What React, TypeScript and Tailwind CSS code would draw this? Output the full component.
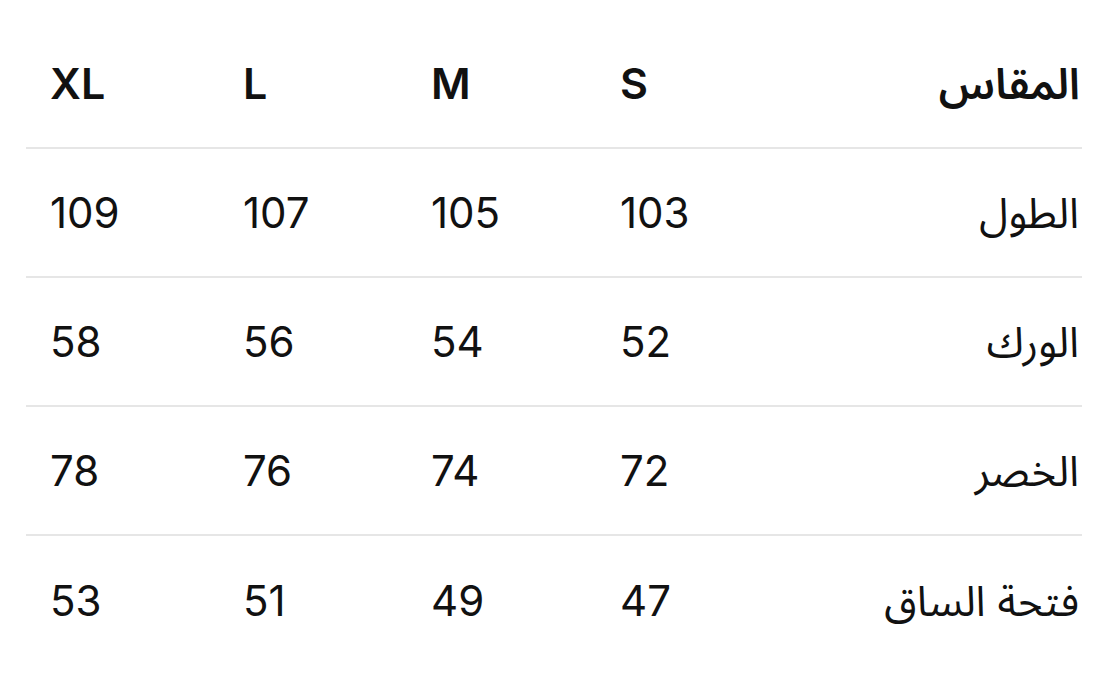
import React from "react";

const headers = ["المقاس", "S", "M", "L", "XL"];
const rows: string[][] = [
  ["الطول", "103", "105", "107", "109"],
  ["الورك", "52", "54", "56", "58"],
  ["الخصر", "72", "74", "76", "78"],
  ["فتحة الساق", "47", "49", "51", "53"],
];

const font = { fontFamily: 'Inter, "Noto Sans Arabic", "DejaVu Sans", sans-serif' };

export default function App() {
  return (
    <div className="w-[1114px] h-[677px] bg-white text-[#111111]" style={font}>
      <div dir="rtl" className="ml-[26px] mr-[32px] pt-[20px]">
        <div className="grid grid-cols-[1fr_189px_189px_188px_193px] h-[129px] items-center border-b-2 border-[#e6e6e6] font-semibold text-[43px] leading-none">
          {headers.map((h, i) => (
            <div key={i} className={i === 0 ? "text-right pr-[2px]" : "text-left pl-[24px]"}>
              {h}
            </div>
          ))}
        </div>
        {rows.map((r, ri) => (
          <div
            key={ri}
            className={`grid grid-cols-[1fr_189px_189px_188px_193px] h-[129px] items-center text-[42px] leading-none ${ri < rows.length - 1 ? "border-b-2 border-[#e6e6e6]" : ""}`}
          >
            {r.map((c, i) => (
              <div key={i} className={i === 0 ? "text-right pr-[3px]" : "text-left pl-[24px]"}>
                {c}
              </div>
            ))}
          </div>
        ))}
      </div>
    </div>
  );
}
